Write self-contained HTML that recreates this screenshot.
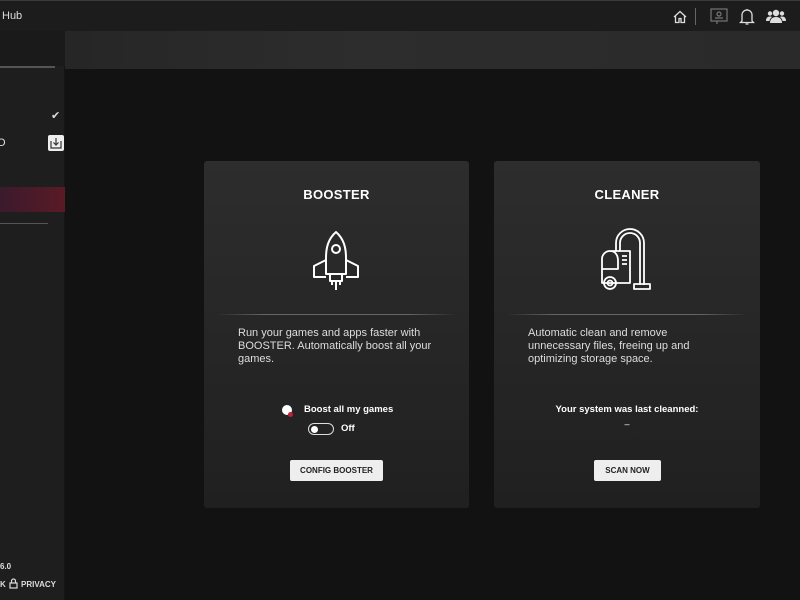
<!DOCTYPE html>
<html><head><meta charset="utf-8"><style>
*{margin:0;padding:0;box-sizing:border-box}
body{width:800px;height:600px;overflow:hidden;background:#121212;font-family:"Liberation Sans",sans-serif;color:#fff;position:relative}
.top{position:absolute;left:0;top:0;width:800px;height:31px;background:#1c1c1c;border-top:1px solid #3a3a3a}
.side{position:absolute;left:0;top:31px;width:65px;height:569px;background:#1e1e1e;border-right:1px solid #151515}
.sub{position:absolute;left:65px;top:31px;width:735px;height:38px;background:linear-gradient(90deg,#262626,#2d2d2d 40%,#2a2a2a)}
.card{position:absolute;top:161px;width:265px;height:347px;border-radius:3px;background:linear-gradient(180deg,#2d2d2d,#202020)}
.card h2{position:absolute;top:26px;width:100%;text-align:center;font-size:13px;font-weight:bold;letter-spacing:.3px}
.card .hr{position:absolute;left:12px;right:12px;top:153px;height:1px;background:linear-gradient(90deg,transparent,#666 20%,#666 80%,transparent)}
.card p{position:absolute;left:34px;right:28px;top:166px;font-size:11px;line-height:13px;color:#ddd}
.btn{position:absolute;top:299px;height:21px;background:#eee;color:#222;font-size:8px;font-weight:bold;border-radius:2px;text-align:center;line-height:21px}
</style></head><body>
<div class="top"><span style="position:absolute;left:2px;top:9px;font-size:11px;color:#ddd">Hub</span>
<svg style="position:absolute;left:672px;top:8px" width="16" height="16" viewBox="0 0 16 16" fill="none" stroke="#ddd" stroke-width="1.3"><path d="M2 8L8 2.5 14 8M3.5 7v6.5h3.5v-4h2v4h3.5V7"/></svg>
<div style="position:absolute;left:695px;top:7px;width:1px;height:17px;background:#666"></div>
<svg style="position:absolute;left:710px;top:7px" width="18" height="17" viewBox="0 0 18 17" fill="none" stroke="#777" stroke-width="1.2"><rect x="1" y="1" width="16" height="12"/><circle cx="9" cy="6" r="2"/><path d="M5 10h8M7 13v3"/></svg>
<svg style="position:absolute;left:739px;top:7px" width="16" height="18" viewBox="0 0 16 18" fill="none" stroke="#ddd" stroke-width="1.3"><path d="M3 13V7a5 5 0 0110 0v6l1.5 1.5h-13zM6.5 16h3M8 1v1"/></svg>
<svg style="position:absolute;left:766px;top:7px" width="20" height="16" viewBox="0 0 20 16" fill="#ddd"><circle cx="10" cy="5" r="3.2"/><path d="M4 15c0-4 2.5-6 6-6s6 2 6 6z"/><circle cx="4" cy="5.5" r="2.2"/><circle cx="16" cy="5.5" r="2.2"/><path d="M0 13c0-3 1.5-4.5 4-4.5 1 0 1.5.2 2 .5-1.5 1-2.3 2.5-2.5 4zM20 13c0-3-1.5-4.5-4-4.5-1 0-1.5.2-2 .5 1.5 1 2.3 2.5 2.5 4z"/></svg>
</div>
<div class="side">
<div style="position:absolute;left:0;top:0;width:65px;height:35px;background:#1a1a1a"></div>
<div style="position:absolute;left:0;top:35px;width:55px;height:2px;background:#555"></div>
<span style="position:absolute;left:51px;top:78px;font-size:11px;color:#ddd">✔</span>
<span style="position:absolute;left:-3px;top:106px;font-size:11px;color:#ddd">O</span>
<div style="position:absolute;left:48px;top:104px;width:16px;height:16px;background:#eee;border-radius:2px"><svg width="16" height="16" viewBox="0 0 16 16" fill="none" stroke="#333" stroke-width="1.2"><path d="M3 6v7h10V6M8 3v7M5.5 7.5L8 10l2.5-2.5"/></svg></div>
<div style="position:absolute;left:0;top:156px;width:65px;height:25px;background:linear-gradient(90deg,#3a1a2c,#5a1a26)"></div>
<div style="position:absolute;left:0;top:192px;width:48px;height:1px;background:#555"></div>
<span style="position:absolute;left:0;top:531px;font-size:8px;font-weight:bold;color:#ddd">6.0</span>
<span style="position:absolute;left:0;top:549px;font-size:8px;font-weight:bold;color:#ddd">K</span>
<svg style="position:absolute;left:9px;top:547px" width="9" height="11" viewBox="0 0 9 11" fill="none" stroke="#ddd" stroke-width="1.2"><rect x="1" y="5" width="7" height="5"/><path d="M2.5 5V3a2 2 0 014 0v2"/></svg>
<span style="position:absolute;left:21px;top:549px;font-size:8px;font-weight:bold;color:#ddd">PRIVACY</span>
</div>
<div class="sub"></div>

<div class="card" style="left:204px">
<h2>BOOSTER</h2>
<svg style="position:absolute;left:107px;top:68px" width="50" height="64" viewBox="0 0 50 64" fill="none" stroke="#fff" stroke-width="2" stroke-linejoin="round"><path d="M25 3C17 10 15 19 15 29v16h20V29c0-10-2-19-10-26z"/><circle cx="25" cy="20" r="4"/><path d="M15 31l-12 6v11h12M35 31l12 6v11H35M19 45v7h12v-7M25 52v9M21 52v4M29 52v4"/></svg>
<div class="hr"></div>
<p>Run your games and apps faster with BOOSTER. Automatically boost all your games.</p>
<div style="position:absolute;left:78px;top:244px;width:10px;height:10px;border-radius:50%;background:#fff"></div>
<div style="position:absolute;left:84px;top:251px;width:5px;height:5px;border-radius:50%;background:#c0203a"></div>
<span style="position:absolute;left:100px;top:243px;font-size:9.5px;font-weight:bold">Boost all my games</span>
<div style="position:absolute;left:104px;top:262px;width:26px;height:12px;border:1.3px solid #ddd;border-radius:6px"><div style="position:absolute;left:2px;top:1.5px;width:7px;height:7px;border-radius:50%;background:#fff"></div></div>
<span style="position:absolute;left:137px;top:262px;font-size:9.5px;font-weight:bold">Off</span>
<div class="btn" style="left:86px;width:93px">CONFIG BOOSTER</div>
</div>

<div class="card" style="left:494px;width:266px">
<h2>CLEANER</h2>
<svg style="position:absolute;left:104px;top:66px" width="56" height="66" viewBox="0 0 56 66" fill="none" stroke="#fff" stroke-width="1.8" stroke-linejoin="round"><path d="M18 24V16a14 14 0 0128 0v42M22 24V16a10 10 0 0120 0v42"/><path d="M12 24h20v32H4V32a8 8 0 018-8zM12 24c6 0 8 5 8 10v8H4"/><path d="M24 29h5M24 33h5M24 37h5"/><circle cx="12" cy="56" r="6"/><circle cx="12" cy="56" r="2.5"/><rect x="36" y="57" width="16" height="5"/></svg>
<div class="hr"></div>
<p>Automatic clean and remove unnecessary files, freeing up and optimizing storage space.</p>
<span style="position:absolute;left:0;width:100%;text-align:center;top:243px;font-size:9.5px;font-weight:bold">Your system was last cleanned:</span>
<span style="position:absolute;left:0;width:100%;text-align:center;top:258px;font-size:9px">–</span>
<div class="btn" style="left:100px;width:67px">SCAN NOW</div>
</div>
</body></html>
